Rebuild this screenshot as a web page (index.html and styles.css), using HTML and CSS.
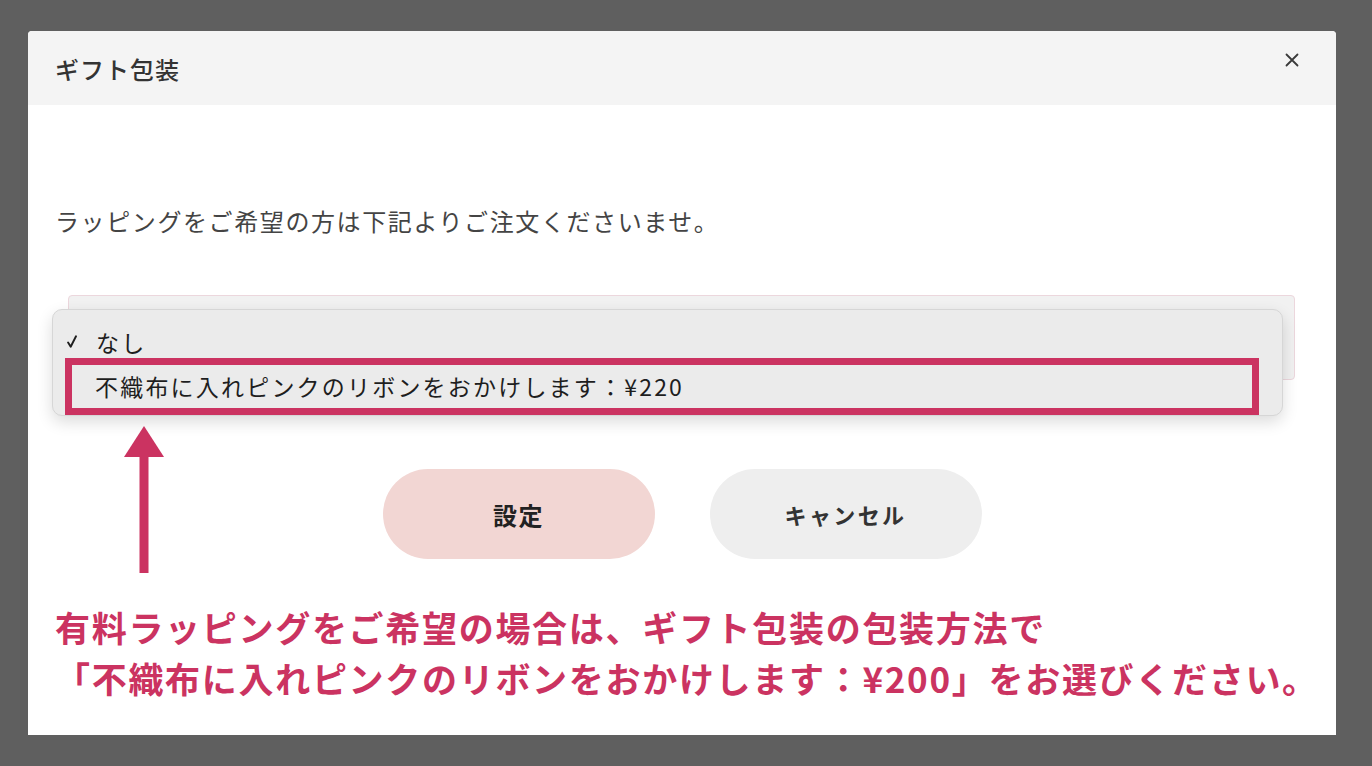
FILE: index.html
```html
<!DOCTYPE html>
<html lang="ja">
<head>
  <meta charset="UTF-8" />
  <meta name="viewport" content="width=device-width, initial-scale=1.0" />
  <title>ギフト包装</title>
  <link rel="stylesheet" href="styles.css">
</head>
<body>
  <div class="panel">
    <div class="modal-head">
      <h2 class="modal-title">ギフト包装</h2>
      <button class="close" type="button" aria-label="閉じる">
        <svg width="14" height="14" viewBox="0 0 14 14"><path d="M1.5 1.5L12.5 12.5M12.5 1.5L1.5 12.5" stroke="#3a3a3a" stroke-width="1.8" stroke-linecap="round"/></svg>
      </button>
    </div>

    <div class="modal-body">
      <p class="lead">ラッピングをご希望の方は下記よりご注文くださいませ。</p>

      <div class="select-wrap">
        <div class="select-box"></div>
        <ul class="dropdown">
          <li class="opt opt-checked">
            <svg class="check" width="10" height="13" viewBox="0 0 10 13"><path d="M1.1 7.6L3.7 11.7L9 1.3" fill="none" stroke="#1e1e1e" stroke-width="1.9" stroke-linecap="round" stroke-linejoin="round"/></svg>
            <span>なし</span>
          </li>
          <li class="opt opt-picked">不織布に入れピンクのリボンをおかけします：¥220</li>
        </ul>
      </div>

      <div class="actions">
        <button class="btn btn-ok" type="button">設定</button>
        <button class="btn btn-cancel" type="button">キャンセル</button>
      </div>
    </div>

    <div class="note">
      <p>有料ラッピングをご希望の場合は、ギフト包装の包装方法で</p>
      <p>「不織布に入れピンクのリボンをおかけします：¥200」をお選びください。</p>
    </div>

    <svg class="arrow" width="40" height="147" viewBox="0 0 40 147">
      <polygon points="20,0 40,31 0,31" fill="#cb3361"/>
      <rect x="15.5" y="30" width="9" height="117" fill="#cb3361"/>
    </svg>
  </div>
</body>
</html>
```

FILE: styles.css
```css
body {
  margin: 0;
  background-color: #5f5f5f;
  font-family: "Noto Sans CJK JP", "Noto Sans", sans-serif;
  color: #333;
}

.panel {
  position: relative;
  width: 1308px;
  height: 704px;
  margin: 31px 0 0 28px;
  background: #fff;
  border-radius: 4px 4px 0 0;
  overflow: hidden;
}

.modal-head {
  height: 74px;
  display: flex;
  align-items: center;
  justify-content: space-between;
  padding: 0 37px 0 27px;
  background-color: #f4f4f4;
}

.modal-title {
  margin: 0;
  font-size: 24px;
  font-weight: 500;
  letter-spacing: 1px;
  color: #333;
}

.close {
  margin-top: -16px;
  padding: 0;
  border: none;
  background: none;
  width: 14px;
  height: 14px;
  cursor: pointer;
}

.close svg {
  display: block;
}

.modal-body {
  padding: 101px 27px 0;
}

.lead {
  margin: 0;
  font-size: 24px;
  line-height: 30px;
  letter-spacing: 1.6px;
  color: #444;
}

.select-wrap {
  position: relative;
  margin: 59px 14px 0 13px;
}

.select-box {
  height: 83px;
  background-color: #f1f1f1;
  border: 1px solid #ecd7dd;
  border-radius: 4px;
}

.dropdown {
  position: absolute;
  left: -16px;
  top: 14px;
  width: 1231px;
  height: 107px;
  box-sizing: border-box;
  margin: 0;
  padding: 15px 0 0 0;
  list-style: none;
  background-color: #ebebeb;
  border: 1px solid #d6d6d6;
  border-radius: 10px;
  box-shadow: 0 6px 16px rgba(0, 0, 0, 0.14);
}

.opt {
  font-size: 23px;
  letter-spacing: 2.2px;
  color: #1e1e1e;
}

.opt-checked {
  height: 33px;
  display: flex;
  align-items: center;
  padding-left: 14px;
}

.check {
  margin-right: 19px;
}

.opt-picked {
  margin-left: 12px;
  width: 1194px;
  height: 57px;
  box-sizing: border-box;
  border: 7px solid #cb3361;
  padding-left: 23px;
  line-height: 43px;
}

.actions {
  display: flex;
  justify-content: center;
  gap: 55px;
  margin-top: 89px;
}

.btn {
  width: 272px;
  height: 90px;
  border: none;
  border-radius: 45px;
  font-family: inherit;
  font-size: 22px;
  font-weight: 700;
  letter-spacing: 2.4px;
  color: #222;
  cursor: pointer;
}

.btn-ok {
  background-color: #f2d6d3;
  font-size: 24px;
  letter-spacing: 1.5px;
}

.btn-cancel {
  background-color: #eeeeee;
  color: #333;
}

.note {
  margin-top: 42px;
  padding-left: 27px;
  color: #cb3361;
  font-size: 35px;
  font-weight: 700;
  line-height: 51px;
  letter-spacing: 1.7px;
}

.note p {
  margin: 0;
}

.arrow {
  position: absolute;
  left: 96px;
  top: 395px;
}
```
